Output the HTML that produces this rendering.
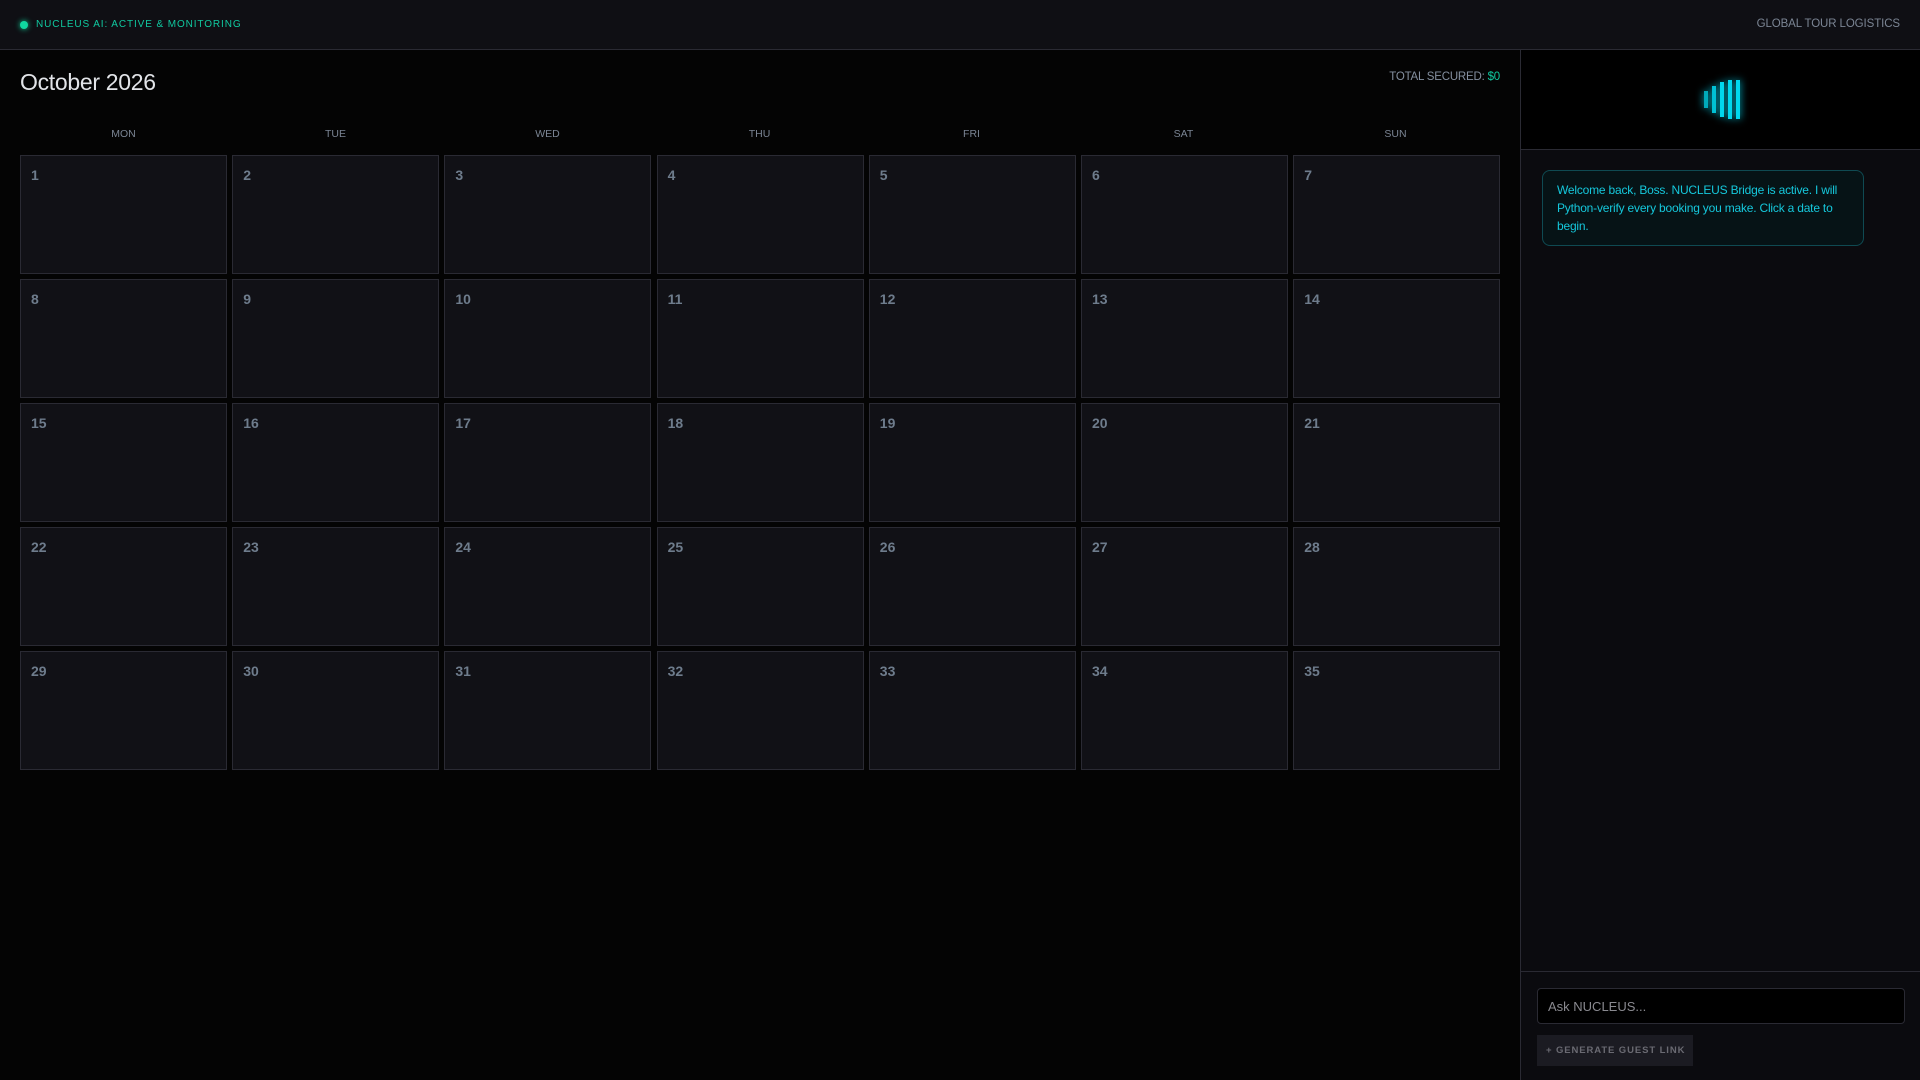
<!DOCTYPE html>
<html><head><meta charset="utf-8"><style>
*{box-sizing:border-box;margin:0;padding:0}
body{width:1920px;height:1080px;background:#040404;font-family:"Liberation Sans",sans-serif;overflow:hidden;position:relative}
.hdr{position:absolute;left:0;top:0;width:1920px;height:50px;background:#0f0f14;border-bottom:1px solid #2a2a33}
.dot{position:absolute;left:20px;top:21px;width:8px;height:8px;border-radius:50%;background:#10d9a0;box-shadow:0 0 6px #10d9a0}
.st{position:absolute;left:36px;top:19px;font-size:10px;letter-spacing:0.9px;color:#10c9a0}
.gt{position:absolute;right:20px;top:18px;font-size:11.5px;color:#7b8594;letter-spacing:-0.1px}
.title{position:absolute;left:20px;top:69px;font-size:23px;color:#e2e4e8;font-weight:300;letter-spacing:-0.3px}
.tot{position:absolute;right:420px;top:71px;font-size:11.5px;color:#8590a0;letter-spacing:-0.2px}
.tot span{color:#10c9a0}
.dn{position:absolute;top:128px;width:207px;text-align:center;font-size:10.5px;color:#7b8594}
.cell{position:absolute;width:207px;height:119px;background:#111116;border:1px solid #2a2a33}
.cell b{position:absolute;left:10px;top:11px;font-size:14px;color:#6e7c8c}
.side{position:absolute;left:1520px;top:50px;width:400px;height:1030px;background:#0b0b0f;border-left:1px solid #2a2a33}
.top{height:100px;background:#000;border-bottom:1px solid #2a2a33;position:relative}
.bar{position:absolute;width:4px;background:#00d8ee;box-shadow:0 0 8px #00c8e0}
.msg{position:absolute;left:21px;top:120px;width:322px;height:76px;border:1px solid #0f4a52;background:#061316;border-radius:8px;padding:10px 14px;font-size:12px;line-height:18px;color:#15c8dc;letter-spacing:-0.2px}
.bot{position:absolute;left:0;top:921px;width:400px;height:109px;border-top:1px solid #2a2a33}
.inp{position:absolute;left:16px;top:16px;width:368px;height:36px;background:#000;border:1px solid #2a2a33;border-radius:4px;padding:10px 10px;font-size:13px;color:#8a8a90}
.btn{position:absolute;left:16px;top:63px;width:156px;height:31px;background:#1b1b22;font-size:9.5px;font-weight:bold;letter-spacing:0.9px;color:#6a6a72;padding:10px 9px;white-space:nowrap}
</style></head><body>
<div class="hdr"><div class="dot"></div><div class="st">NUCLEUS AI: ACTIVE &amp; MONITORING</div><div class="gt">GLOBAL TOUR LOGISTICS</div></div>
<div class="title">October 2026</div>
<div class="tot">TOTAL SECURED: <span>$0</span></div>
<div class="dn" style="left:20px">MON</div><div class="dn" style="left:232px">TUE</div><div class="dn" style="left:444px">WED</div><div class="dn" style="left:656px">THU</div><div class="dn" style="left:868px">FRI</div><div class="dn" style="left:1080px">SAT</div><div class="dn" style="left:1292px">SUN</div>
<div id="g"></div>
<div class="side">
<div class="top">
<div class="bar" style="left:183px;top:41px;height:17px;background:#00a8b8"></div>
<div class="bar" style="left:191px;top:36px;height:27px;background:#00c0d4"></div>
<div class="bar" style="left:199px;top:32px;height:35px"></div>
<div class="bar" style="left:207px;top:30px;height:39px"></div>
<div class="bar" style="left:215px;top:30px;height:39px"></div>
</div>
<div class="msg">Welcome back, Boss. NUCLEUS Bridge is active. I will Python-verify every booking you make. Click a date to begin.</div>
<div class="bot"><div class="inp">Ask NUCLEUS...</div><div class="btn">+ GENERATE GUEST LINK</div></div>
</div>
<script>
var h='';for(var i=0;i<35;i++){var c=i%7,r=Math.floor(i/7);h+='<div class="cell" style="left:'+(20+c*212.2)+'px;top:'+(155+r*124)+'px"><b>'+(i+1)+'</b></div>';}
document.getElementById('g').innerHTML=h;
</script>
</body></html>
